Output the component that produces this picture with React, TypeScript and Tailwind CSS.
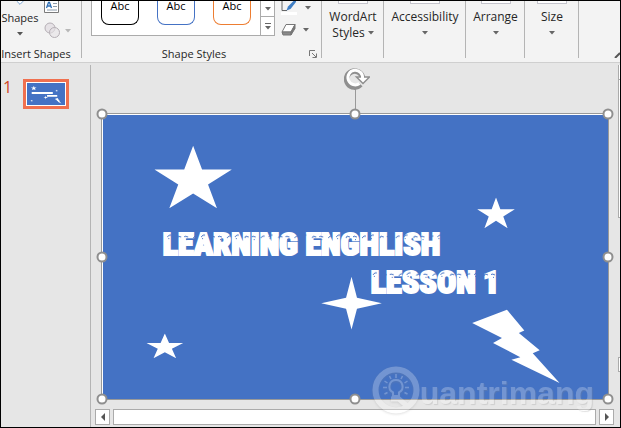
import type { ReactNode } from "react";

const STAR = "39,0 48,24 78,24 54,39 63,63 39,48 15,63 24,39 0,24 30,24";

const FLECKS = "M3 5l2-2h2M4 6l1 1M13 6l1-2 3 1M20 5l1-1 3 1M22 7l1 1M29 6l2-2h2";

const commands = [
  { lines: ["WordArt", "Styles"], width: "w-[62px]" },
  { lines: ["Accessibility"], width: "w-[82px]" },
  { lines: ["Arrange"], width: "w-[59px]" },
  { lines: ["Size"], width: "w-[54px]" },
];

const presets = [
  { id: "black", border: "border-black" },
  { id: "blue", border: "border-[#4472c4]" },
  { id: "orange", border: "border-[#ed7d31]" },
];

const handles = [
  "left-0 top-0",
  "left-1/2 top-0",
  "left-full top-0",
  "left-0 top-1/2",
  "left-full top-1/2",
  "left-0 top-full",
  "left-1/2 top-full",
  "left-full top-full",
];

function Caret({ className = "text-[#666]" }: { className?: string }) {
  return (
    <svg viewBox="0 0 6 4" className={`w-1.5 h-1 shrink-0 ${className}`} fill="currentColor">
      <path d="M0 0h6L3 3.5z" />
    </svg>
  );
}

function Star({ x, y, width, height }: { x: number; y: number; width: number; height: number }) {
  return (
    <svg x={x} y={y} width={width} height={height} viewBox="0 0 78 63" preserveAspectRatio="none">
      <polygon points={STAR} />
    </svg>
  );
}

function SlideShapes({ children }: { children?: ReactNode }) {
  return (
    <svg viewBox="0 0 508 287" className="absolute inset-0 w-full h-full" fill="white" aria-hidden="true">
      <Star x={52} y={32} width={78} height={63} />
      <Star x={377} y={84} width={38} height={31} />
      <Star x={44} y={221} width={37} height={25} />
      <polygon points="250.5,164 256,185 281,190.5 256,196 250.5,217 245,196 220,190.5 245,185" />
      <polygon points="372,210.500 407,197 424.500,218 419,220.500 440,238 433,241 460,271 411.500,247.500 420.500,245 393,230.500 402,225.500" />
      {children}
    </svg>
  );
}

// Frosty flecks lying over the top of each line of the title
function Frost() {
  return (
    <svg viewBox="0 0 508 287" className="absolute inset-0 w-full h-full" aria-hidden="true">
      <defs>
        <pattern id="frost" width="34" height="26" patternUnits="userSpaceOnUse" x="62" y="119">
          <path d={FLECKS} fill="none" stroke="#4472c4" />
        </pattern>
        <pattern id="frost-second" width="34" height="26" patternUnits="userSpaceOnUse" x="269" y="157">
          <path d={FLECKS} fill="none" stroke="#4472c4" />
        </pattern>
      </defs>
      <rect x="62" y="119" width="282" height="12" fill="url(#frost)" />
      <rect x="269" y="157" width="138" height="12" fill="url(#frost-second)" />
    </svg>
  );
}

function Group({ label, className, children }: { label: string; className: string; children: ReactNode }) {
  return (
    <section className={`relative flex flex-col shrink-0 ${className}`}>
      <div className="flex h-[35px]">{children}</div>
      <h2 className="mt-[10px] text-center text-[11px] leading-4 whitespace-nowrap">{label}</h2>
    </section>
  );
}

function Ribbon() {
  return (
    <header className="flex h-[62px] overflow-hidden bg-[#f3f3f3] border-b border-[#cfcfcf] text-xs text-[#262626]">
      <Group label="Insert Shapes" className="w-20 pr-2.5">
        <button className="flex flex-col items-center w-[38px] shrink-0 text-[11px]">
          <svg viewBox="0 0 12 6" className="w-3 h-1.5" fill="#fff" stroke="#3f7ec4">
            <path d="M1 0l5 5 5-5" />
          </svg>
          <span className="mt-[5px] leading-4">Shapes</span>
          <Caret className="mt-1.5 text-[#555]" />
        </button>
        <div className="flex flex-col pl-[5px]">
          <button aria-label="Text Box" className="h-3">
            <svg viewBox="0 0 15 12" className="w-[15px] h-3" fill="none">
              <path d="M.5 0v11.500h14V0" fill="#fff" stroke="#7a7a7a" />
              <path d="M2.500 7L4.500 1.500h1L7.500 7M3.500 5h3" stroke="#2f6fb5" strokeWidth="1.300" />
              <path d="M9 2.500h4M9 5.500h4M3 9h10" stroke="#8a9aaa" />
            </svg>
          </button>
          <button aria-label="Merge Shapes" className="mt-[9px] flex items-center gap-1">
            <svg viewBox="0 0 17 17" className="w-[17px] h-[17px]" fill="#e6e2e6" stroke="#b5afb5">
              <circle cx="6" cy="6" r="5" />
              <circle cx="10.500" cy="10.500" r="5" fillOpacity=".6" />
            </svg>
            <Caret className="text-[#b8b8b8]" />
          </button>
        </div>
      </Group>
      <Divider />
      <Group label="Shape Styles" className="w-[239px] pl-[9px] pr-6">
        <div className="flex bg-white border border-t-0 border-[#ababab]">
          <div className="flex gap-[18px] pl-[9px] pr-[9px]">
            {presets.map((preset) => (
              <button
                key={preset.id}
                className={`flex justify-center w-[38px] h-6 rounded-b-lg border border-t-0 text-[11px] text-black leading-[10px] ${preset.border}`}
              >
                Abc
              </button>
            ))}
          </div>
          <div className="flex flex-col w-[14px] border-l border-[#ababab]">
            <button aria-label="Next row" className="flex items-center justify-center h-4 border-b border-[#ababab]">
              <Caret />
            </button>
            <button aria-label="More styles" className="flex flex-col items-center justify-center gap-0.5 flex-1">
              <span className="w-1.5 h-px bg-[#666]" />
              <Caret />
            </button>
          </div>
        </div>
        <div className="flex flex-col pl-1.5">
          <button aria-label="Shape Outline" className="flex items-center gap-2 h-[14px]">
            <svg viewBox="0 0 16 14" className="w-4 h-[14px]" fill="none">
              <path d="M1 0v9.500h5" stroke="#666" />
              <path d="M5.500 9.500l1.500-4L12.500 0H15v1L9.500 8z" fill="#3f7ec4" />
              <path d="M0 11h16v3H0z" fill="#fff" />
            </svg>
            <Caret />
          </button>
          <button aria-label="Shape Effects" className="flex items-center gap-1.5 mt-2 h-[14px]">
            <svg viewBox="0 0 16 14" className="w-4 h-[14px]" stroke="#777" strokeLinejoin="round">
              <path d="M5 1.500h9L10 9H1z" fill="#fff" />
              <path d="M1 9h9v3H2z" fill="#8a8a8a" />
              <path d="M14 1.500v4L10 12V9z" fill="#777" />
            </svg>
            <Caret />
          </button>
        </div>
        <button aria-label="Format Shape" className="absolute right-1 bottom-1">
          <svg viewBox="0 0 8 8" className="w-2 h-2" fill="none" stroke="#777">
            <path d="M.5 6V.5H6M3 3l4 4M7.500 3.500v4h-4" />
          </svg>
        </button>
      </Group>
      <Divider />
      {commands.map((command) => (
        <div key={command.lines[0]} className="flex shrink-0">
          <button className={`flex flex-col items-center -mr-px leading-4 whitespace-nowrap ${command.width}`}>
            <span className="w-[30px] h-[3px] mb-[5px] bg-white border border-t-0 border-[#c4c4cc]" />
            <span>{command.lines[0]}</span>
            <span className="flex items-center justify-center gap-[3px] h-4">
              {command.lines[1]}
              <Caret />
            </span>
          </button>
          <Divider />
        </div>
      ))}
      <button aria-label="Collapse the Ribbon" className="ml-auto self-end mb-1">
        <svg viewBox="0 0 6 6" className="w-1.5 h-1.5" fill="none" stroke="#555" strokeWidth="2">
          <path d="M1 6l5-5" />
        </svg>
      </button>
    </header>
  );
}

function Divider() {
  return <div className="w-px h-[57px] shrink-0 bg-[#b4b4b4]" />;
}

function Slide() {
  return (
    <div className="relative aspect-[508/287] bg-[#4472c4] border border-[#999] shadow-[inset_1px_1px_0_#fff]">
      <SlideShapes />
      <h1 className="absolute left-[12%] top-[39%] font-['Liberation_Sans_Narrow','Roboto_Condensed','Roboto',sans-serif] font-black text-[32px] leading-[38px] text-white whitespace-nowrap [-webkit-text-stroke:2px_white]">
        <span className="block">LEARNING ENGHLISH</span>
        <span className="block pl-[208px]">LESSON 1</span>
      </h1>
      <Frost />
      <div className="absolute left-1/2 bottom-full w-px h-[26px] bg-[#999]" />
      <button aria-label="Rotate" className="absolute left-1/2 bottom-full mb-6 -ml-[11px] w-[26px] h-[22px]">
        <svg viewBox="0 0 26 22" className="w-[26px] h-[22px]" fill="none">
          <path d="M16.500 16.500A8 8 0 1 1 18.500 10" stroke="#8f8f8f" strokeWidth="5.500" />
          <path d="M12.500 9h13L19 15.500z" fill="#fff" stroke="#8f8f8f" strokeWidth="1.500" />
          <path d="M15.500 15.500A7.300 7.300 0 1 1 18.500 10.500" stroke="#fff" strokeWidth="3" />
        </svg>
      </button>
      {handles.map((place) => (
        <span
          key={place}
          className={`absolute w-[11px] h-[11px] -translate-x-1/2 -translate-y-1/2 rounded-full bg-white border-2 border-[#8f8f8f] ${place}`}
        />
      ))}
    </div>
  );
}

function Watermark() {
  return (
    <div className="absolute right-6 bottom-[13px] flex items-center opacity-25 pointer-events-none">
      <svg viewBox="0 0 48 48" className="w-12 h-12 drop-shadow-[0_1px_1px_#888]" fill="none" stroke="#fff">
        <circle cx="24" cy="24" r="20.500" strokeWidth="6" />
        <path d="M24 14a6.500 6.500 0 0 0-3 12.300V30h6v-3.700A6.500 6.500 0 0 0 24 14z" strokeWidth="2" />
        <path
          d="M24 8v4M17.500 10l1.500 3M30.500 10l-1.500 3M12.500 15l3 2M35.500 15l-3 2M11 21.500h4M33 21.500h4M12.500 28l3-1.500M35.500 28l-3-1.500"
          strokeWidth="1.500"
        />
        <path d="M19 33h8l8 7" strokeWidth="5" />
      </svg>
      <span className="pt-1.5 font-['Liberation_Sans',Arial,sans-serif] font-bold text-[32px] leading-9 text-white [text-shadow:1px_1px_1px_#888]">
        uantrimang
      </span>
    </div>
  );
}

function ScrollBar() {
  return (
    <div className="flex h-4 mt-[9px] px-1 gap-[3px]">
      <button aria-label="Scroll left" className="flex items-center justify-center w-[15px] bg-white border border-[#ababab]">
        <svg viewBox="0 0 4 8" className="w-1 h-2" fill="#555">
          <path d="M4 0v8L0 4z" />
        </svg>
      </button>
      <div className="flex-1 bg-white border border-[#ababab]" />
      <button aria-label="Scroll right" className="flex items-center justify-center w-[15px] bg-white border border-[#ababab]">
        <svg viewBox="0 0 4 8" className="w-1 h-2" fill="#555">
          <path d="M0 0v8l4-4z" />
        </svg>
      </button>
    </div>
  );
}

export default function App() {
  return (
    <div className="flex flex-col min-h-screen bg-[#e6e6e6] border border-black font-['Open_Sans','Noto_Sans',sans-serif]">
      <Ribbon />
      <div className="flex flex-1 pt-0.5">
        <aside className="flex items-start w-[90px] shrink-0 pt-[14px] pl-0.5 border-r border-[#b4b4b4]">
          <span className="w-5 text-base leading-4 text-[#d24726]">1</span>
          <button aria-label="Slide 1" className="w-[46px] h-[30px] p-px bg-white border-3 border-[#f0704f]">
            <span className="relative block w-full h-full bg-[#4472c4]">
              <SlideShapes>
                <path d="M63 130h282M268 168h136" stroke="#fff" strokeWidth="24" />
              </SlideShapes>
            </span>
          </button>
        </aside>
        <main className="relative flex-1 min-w-0 pt-12">
          <div className="pl-[10px] pr-[9px]">
            <Slide />
          </div>
          <ScrollBar />
          <Watermark />
        </main>
        <div className="w-0.5 shrink-0 flex flex-col">
          <div className="h-[15px] bg-white border-l border-b border-[#ababab]" />
          <div className="h-[138px] bg-white border-l border-b border-[#ababab]" />
          <div className="h-[15px] mt-[139px] bg-white border-l border-y border-[#ababab]" />
        </div>
      </div>
    </div>
  );
}
